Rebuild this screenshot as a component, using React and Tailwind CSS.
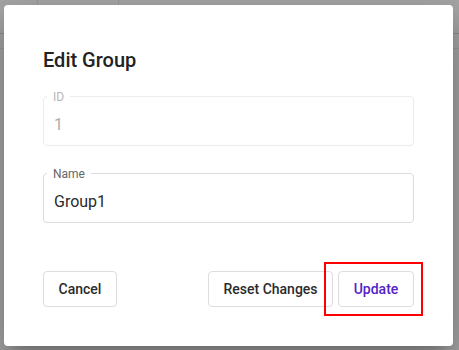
import React, { useState } from "react";

const font = { fontFamily: "Roboto, 'Liberation Sans', sans-serif" };

const OutlinedField = ({ label, value, disabled, onChange }) => (
  <div
    className={`relative h-[50px] rounded border ${
      disabled ? "border-[#ececec]" : "border-[#dcdcdc]"
    }`}
  >
    <span
      className={`absolute left-[3px] top-[-8px] bg-white px-[6px] text-[12px] leading-4 ${
        disabled ? "text-[#b5b5b5]" : "text-[#666666]"
      }`}
    >
      {label}
    </span>
    <input
      value={value}
      disabled={disabled}
      onChange={(e) => onChange && onChange(e.target.value)}
      className={`h-full w-full bg-transparent pl-[10px] pt-[6px] text-[16px] outline-none ${
        disabled ? "text-[#adadad]" : "text-[#2b2b2b]"
      }`}
    />
  </div>
);

export default function App() {
  const [name, setName] = useState("Group1");

  return (
    <div className="relative h-[350px] w-full overflow-hidden bg-[#a7a7a7]" style={font}>
      {/* page behind the backdrop */}
      <div className="flex h-[34px] border-b border-[#8e8e8e]">
        <div className="w-[38px] border-r border-[#999999]" />
        <div className="w-[81px] border-r border-[#999999]" />
      </div>
      <div className="h-[15px] border-b border-[#9b9b9b]" />

      {/* dialog */}
      <div className="absolute left-[4px] top-[5px] w-[449px] rounded bg-white px-[39px] pb-[39px] pt-[39px] shadow-[0_11px_15px_-7px_rgba(0,0,0,0.2),0_24px_38px_3px_rgba(0,0,0,0.14),0_9px_46px_8px_rgba(0,0,0,0.12)]">
        <h2 className="text-[20px] font-medium leading-8 text-[#222222]">Edit Group</h2>

        <div className="mt-[20px] flex flex-col gap-[27px]">
          <OutlinedField label="ID" value="1" disabled />
          <OutlinedField label="Name" value={name} onChange={setName} />
        </div>

        <div className="mt-[48px] flex items-center">
          <button className="h-[36px] w-[74px] rounded border border-[#dedede] text-[14px] font-medium text-[#2b2b2b]">
            Cancel
          </button>
          <div className="ml-auto flex gap-[5px]">
            <button className="h-[36px] w-[125px] rounded border border-[#dedede] text-[14px] font-medium text-[#2b2b2b]">
              Reset Changes
            </button>
            <div className="relative">
              <button className="h-[36px] w-[76px] rounded border border-[#dedede] text-[14px] font-medium text-[#5322c9]">
                Update
              </button>
              <div className="pointer-events-none absolute left-[-14px] top-[-9px] h-[54px] w-[99px] border-2 border-[#ff0000]" />
            </div>
          </div>
        </div>
      </div>
    </div>
  );
}
